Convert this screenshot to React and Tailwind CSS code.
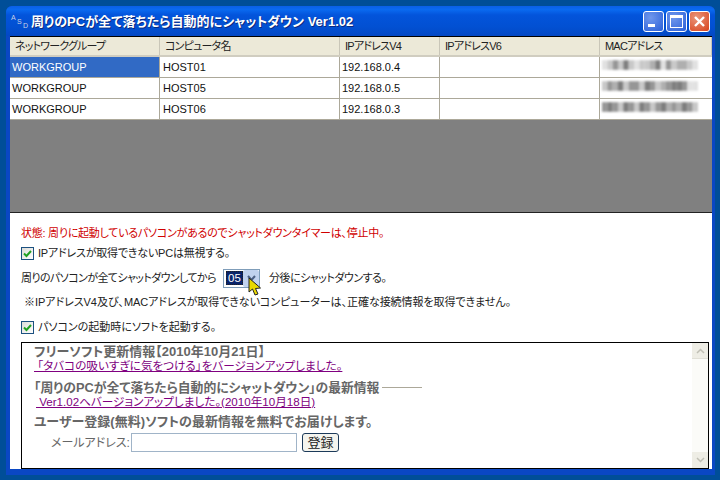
import React from "react";

const jp = "font-['Liberation_Sans','Noto_Sans_CJK_JP',sans-serif] [font-feature-settings:'palt'] whitespace-nowrap";

const columns = ["ネットワークグループ", "コンピュータ名", "IPアドレスV4", "IPアドレスV6", "MACアドレス"];

const hosts = [
  { group: "WORKGROUP", name: "HOST01", ip: "192.168.0.4", selected: true, mac: [9, 8, 6, 8, 5, 8, 9, 8, 8, 7, 5, 9, 6, 8, 7, 7, 8, 9] },
  { group: "WORKGROUP", name: "HOST05", ip: "192.168.0.5", mac: [8, 6, 7, 5, 8, 6, 6, 8, 5, 6, 8, 7, 6, 5, 5, 6, 9, 9] },
  { group: "WORKGROUP", name: "HOST06", ip: "192.168.0.3", mac: [6, 5, 6, 8, 5, 6, 8, 5, 6, 8, 6, 5, 7, 6, 7, 5, 6, 8] },
];

const Mosaic = ({ cells }) => (
  <svg width="96" height="16" viewBox="0 0 18 3" preserveAspectRatio="none" className="blur-[1px]">
    {cells.map((v, i) => (
      <rect key={i} x={i} y="0.6" width="1" height="1.8" fill={`rgb(${v * 25},${v * 25},${v * 25})`} />
    ))}
  </svg>
);

const Check = () => (
  <span className="flex h-[13px] w-[13px] items-center justify-center border border-[#1c5180] bg-[linear-gradient(135deg,#dcdcd7,#ffffff)]">
    <svg width="9" height="9" viewBox="0 0 9 9">
      <path d="M1 4.5 L3.5 7 L8 2" fill="none" stroke="#21a121" strokeWidth="2" />
    </svg>
  </span>
);

const WinButton = ({ red, children }) => (
  <div
    className={
      "flex h-[21px] w-[21px] items-center justify-center rounded-[3px] border border-white " +
      (red
        ? "bg-[radial-gradient(circle_at_35%_30%,#e9967a,#d8431c)]"
        : "bg-[radial-gradient(circle_at_35%_30%,#6f97ec,#2a5fd8)]")
    }
  >
    {children}
  </div>
);

const App = () => {
  return (
    <div className={"h-[480px] w-[720px] overflow-hidden bg-[#004e98] pl-[6px] pt-[6px] " + jp}>
      <div className="flex h-[469px] w-[709px] flex-col rounded-t-[6px] bg-[#0a47c4] pb-[6px] pl-[4px] pr-[3px]">
        {/* title bar */}
        <div className="-ml-[4px] -mr-[3px] flex h-[30px] shrink-0 items-center rounded-t-[6px] bg-[linear-gradient(to_bottom,#0a5fe8_0%,#0a6af0_12%,#0354db_30%,#0250d2_70%,#0348c4_100%)] pl-[4px] pr-[5px]">
          <svg width="21" height="18" viewBox="0 0 21 18">
            <text x="1" y="8" fontSize="7" fill="#c8d2e6" fontFamily="Liberation Sans">A</text>
            <text x="7" y="12" fontSize="7" fill="#c8d2e6" fontFamily="Liberation Sans">S</text>
            <text x="13" y="16" fontSize="7" fill="#c8d2e6" fontFamily="Liberation Sans">D</text>
          </svg>
          <span className="flex-1 text-[13px] font-bold leading-none text-white [text-shadow:1px_1px_#0a2a80]">
            周りのPCが全て落ちたら自動的にシャットダウン Ver1.02
          </span>
          <div className="flex gap-[2px]">
            <WinButton>
              <div className="mt-[9px] mr-[5px] h-[3px] w-[7px] bg-white" />
            </WinButton>
            <WinButton>
              <div className="h-[13px] w-[13px] border-[1.5px] border-t-[3px] border-white" />
            </WinButton>
            <WinButton red>
              <svg width="13" height="13" viewBox="0 0 13 13">
                <path d="M2 2 L11 11 M11 2 L2 11" stroke="white" strokeWidth="2.4" />
              </svg>
            </WinButton>
          </div>
        </div>

        {/* host list */}
        <div className="flex h-[177px] shrink-0 flex-col border-b border-t border-b-[#222] border-t-black bg-[#808080]">
          <div className="grid h-[20px] grid-cols-[150px_180px_100px_160px_112px] border-b-2 border-[#d0cdc0] bg-[#ece9d8] text-[11px] leading-[18px] tracking-[-0.8px] text-[#222]">
            {columns.map((c) => (
              <div key={c} className="border-r border-[#c9c6b8] pl-[5px]">{c}</div>
            ))}
          </div>
          {hosts.map((h) => (
            <div key={h.name} className="grid h-[21px] grid-cols-[150px_180px_100px_160px_112px] border-b border-[#aca899] bg-white text-[11px] leading-[20px] text-[#111]">
              <div className={"border-r border-[#aca899] pl-[2px] " + (h.selected ? "bg-[#316ac5] text-white" : "")}>{h.group}</div>
              <div className="border-r border-[#aca899] pl-[3px]">{h.name}</div>
              <div className="border-r border-[#aca899] pl-[2px]">{h.ip}</div>
              <div className="border-r border-[#aca899]" />
              <div className="pl-[2px]"><Mosaic cells={h.mac} /></div>
            </div>
          ))}
        </div>

        {/* settings */}
        <div className="flex flex-1 flex-col bg-white pl-[11px] pr-[3px] text-[11px] text-[#222]">
          <div className="mt-[12px] h-[16px] leading-[16px] tracking-[-0.25px] text-[#d00000]">状態: 周りに起動しているパソコンがあるのでシャットダウンタイマーは、停止中。</div>
          <div className="mt-[4px] flex h-[16px] items-center gap-[4px]"><Check /><span className="tracking-[-0.2px]">IPアドレスが取得できないPCは無視する。</span></div>
          <div className="mt-[7px] flex h-[20px] items-center">
            <span className="w-[202px] tracking-[-0.6px]">周りのパソコンが全てシャットダウンしてから</span>
            <div className="relative flex h-[19px] w-[37px] items-center border border-[#7f9db9] bg-white pl-[2px]">
              <span className="h-[14px] border border-dotted border-[#222] bg-[#0a246a] px-[1px] text-[11.5px] leading-[12px] text-white">05</span>
              <div className="absolute right-0 top-0 flex h-[17px] w-[16px] items-center justify-center rounded-[2px] bg-[#c1d2ee]">
                <svg width="9" height="7" viewBox="0 0 9 7"><path d="M1 1 L4.5 5 L8 1" fill="none" stroke="#4d6185" strokeWidth="2" /></svg>
              </div>
              <svg width="14" height="20" viewBox="0 0 14 20" className="absolute left-[24px] top-[7px]">
                <path d="M1 1 L1 15 L4.5 12 L7 18 L10 17 L7.5 11.5 L12.5 11 Z" fill="#e8d800" stroke="#222" strokeWidth="1" />
              </svg>
            </div>
            <span className="ml-[9px] tracking-[-0.5px]">分後にシャットダウンする。</span>
          </div>
          <div className="mt-[6px] h-[16px] pl-[3px] leading-[16px] tracking-[-0.05px]">※IPアドレスV4及び、MACアドレスが取得できないコンピューターは、正確な接続情報を取得できません。</div>
          <div className="mt-[9px] flex h-[16px] items-center gap-[4px]"><Check /><span>パソコンの起動時にソフトを起動する。</span></div>

          {/* news box */}
          <div className="mt-[7px] flex h-[127px] border border-black">
            <div className="flex-1 pl-[12px] text-[12px] text-[#666]">
              <div className="mt-[1px] h-[15px] text-[13px] font-bold leading-[15px]">フリーソフト更新情報【2010年10月21日】</div>
              <div className="h-[14px] text-[11.6px] leading-[14px] text-[#800080] underline">&nbsp;「タバコの吸いすぎに気をつける」をバージョンアップしました。</div>
              <div className="mt-[7px] flex h-[15px] items-center text-[12.8px] font-bold leading-[15px]">
                「周りのPCが全て落ちたら自動的にシャットダウン」の最新情報
                <span className="ml-[3px] h-px w-[40px] bg-[#aca899]" />
              </div>
              <div className="h-[14px] pl-[2px] text-[11.6px] leading-[14px] text-[#800080] underline">&nbsp;Ver1.02へバージョンアップしました。(2010年10月18日)</div>
              <div className="mt-[5px] h-[16px] text-[13px] font-bold leading-[16px]">ユーザー登録(無料)ソフトの最新情報を無料でお届けします。</div>
              <div className="mt-[3px] flex h-[19px] items-center">
                <span className="w-[97px] pl-[17px]">メールアドレス:</span>
                <div className="h-[19px] w-[166px] border border-[#a0b4c8]" />
                <div className="ml-[5px] flex h-[19px] w-[37px] items-center justify-center rounded-[3px] border border-[#1c3a5a] bg-[#f4f4ee] text-[13px] text-[#222]">登録</div>
              </div>
            </div>
            <div className="flex w-[16px] flex-col justify-between bg-[#fbfbf8]">
              <div className="flex h-[16px] items-center justify-center border-b border-[#e0dfd6] bg-[#eeede5]">
                <svg width="9" height="6" viewBox="0 0 9 6"><path d="M1 5 L4.5 1.5 L8 5" fill="none" stroke="#c0bfb5" strokeWidth="1.5" /></svg>
              </div>
              <div className="flex h-[16px] items-center justify-center bg-[#eeede5]">
                <svg width="9" height="6" viewBox="0 0 9 6"><path d="M1 1 L4.5 4.5 L8 1" fill="none" stroke="#c0bfb5" strokeWidth="1.5" /></svg>
              </div>
            </div>
          </div>
        </div>
      </div>
    </div>
  );
};

export default App;
